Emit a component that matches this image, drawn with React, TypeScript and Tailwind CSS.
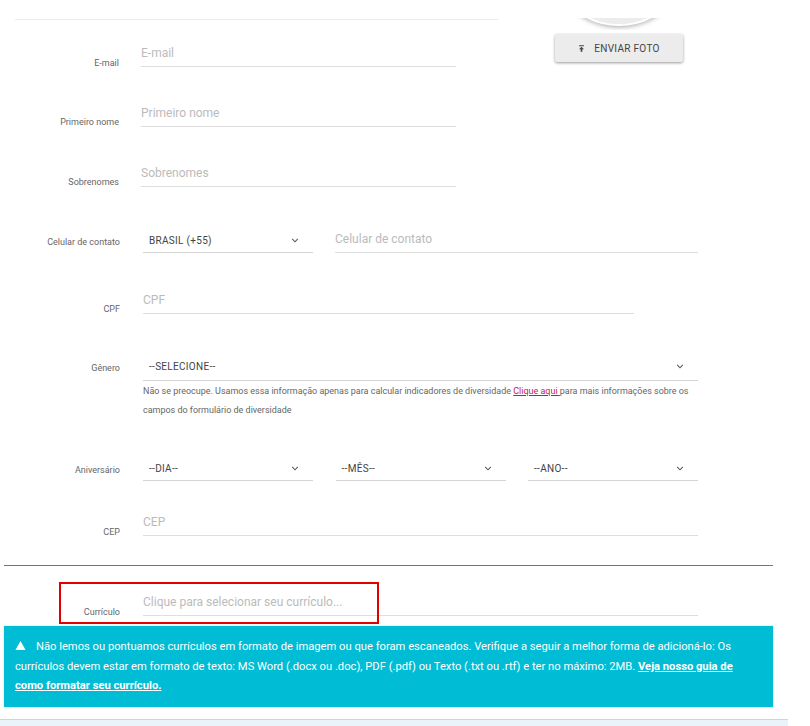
const font = "font-['Roboto',sans-serif]";

function Chevron({ className }: { className: string }) {
  return (
    <svg viewBox="0 0 10 6" className={className} fill="none" stroke="#555" strokeWidth="1.3">
      <path d="M1.5 1 L5 4.6 L8.5 1" />
    </svg>
  );
}

function Label({ text, top }: { text: string; top: string }) {
  return <div className={`w-[105px] shrink-0 text-right text-[9px] leading-[12px] text-[#666] ${top}`}>{text}</div>;
}

function TextField({ placeholder, className }: { placeholder: string; className: string }) {
  return (
    <div className={`h-[30px] border-b border-[#dedede] text-[12px] leading-[33px] text-[#bbbbbb] ${className}`}>
      {placeholder}
    </div>
  );
}

function SelectField({ value, className }: { value: string; className: string }) {
  return (
    <div className={`flex h-[30px] items-center justify-between border-b border-[#d5d5d5] pt-[5px] pr-[14px] pl-[6px] text-[10px] tracking-[0.3px] text-[#444] ${className}`}>
      <span>{value}</span>
      <Chevron className="h-[5px] w-[8px]" />
    </div>
  );
}

export default function App() {
  return (
    <div className={`relative h-[726px] w-[810px] overflow-hidden bg-white ${font}`}>
      <div className="flex pt-[18px]">
        <div className="mt-[1px] ml-[15px] w-[483px] border-t border-[#ececec]">
          <div className="mt-[17px] flex h-[60px] items-start">
            <Label text="E-mail" top="mt-[20px] -ml-[1px]" />
            <TextField placeholder="E-mail" className="ml-[22px] w-[315px]" />
          </div>
          <div className="flex h-[60px] items-start">
            <Label text="Primeiro nome" top="mt-[19px] -ml-[1px]" />
            <TextField placeholder="Primeiro nome" className="ml-[22px] w-[315px]" />
          </div>
          <div className="flex h-[60px] items-start">
            <Label text="Sobrenomes" top="mt-[19px] -ml-[1px]" />
            <TextField placeholder="Sobrenomes" className="ml-[22px] w-[315px]" />
          </div>
        </div>
        <div className="ml-[57px] flex w-[128px] flex-col items-center">
          <div className="relative h-[12px] w-full overflow-hidden">
            <div className="absolute bottom-[4px] left-[-6px] h-[140px] w-[140px] rounded-full border-2 border-white bg-[#ececec] shadow-[0_1px_5px_rgba(0,0,0,0.35)]" />
          </div>
          <div className="mt-[4px] flex h-[28px] w-full items-center justify-center gap-[9px] rounded-[2px] bg-[#ececec] text-[10px] tracking-[0.3px] text-[#444] shadow-[0_1px_3px_rgba(0,0,0,0.4)]">
            <svg viewBox="0 0 10 10" className="h-[7px] w-[7px]" fill="#444">
              <path d="M1.5 0.5 H8.5 V1.8 H1.5 Z M5 2.5 L8.5 6 H6.2 V9.5 H3.8 V6 H1.5 Z" />
            </svg>
            <span>ENVIAR FOTO</span>
          </div>
        </div>
      </div>

      <div className="flex h-[60px] items-start pt-[6px]">
        <Label text="Celular de contato" top="mt-[13px] ml-[15px]" />
        <SelectField value="BRASIL (+55)" className="ml-[23px] w-[170px]" />
        <TextField placeholder="Celular de contato" className="ml-[22px] w-[363px]" />
      </div>
      <div className="flex h-[74px] items-start pt-[7px]">
        <Label text="CPF" top="mt-[19px] ml-[15px]" />
        <TextField placeholder="CPF" className="ml-[23px] w-[491px]" />
      </div>
      <div className="flex items-start">
        <Label text="Gênero" top="mt-[11px] ml-[15px]" />
        <div className="ml-[23px] w-[555px]">
          <SelectField value="--SELECIONE--" className="w-full pb-[3px]" />
          <p className="mt-[1px] text-[8.97px] leading-[19px] text-[#666]">
            Não se preocupe. Usamos essa informação apenas para calcular indicadores de diversidade{" "}
            <a className="text-[#c2185b] underline">Clique aqui </a>
            para mais informações sobre os campos do formulário de diversidade
          </p>
        </div>
      </div>
      <div className="mt-[31px] flex h-[50px] items-start">
        <Label text="Aniversário" top="mt-[13px] ml-[15px]" />
        <div className="ml-[23px] flex w-[555px] gap-[22.5px]">
          <SelectField value="--DIA--" className="w-[170px]" />
          <SelectField value="--MÊS--" className="w-[170px]" />
          <SelectField value="--ANO--" className="w-[170px]" />
        </div>
      </div>
      <div className="mt-[5px] flex h-[38px] items-start">
        <Label text="CEP" top="mt-[20px] ml-[15px]" />
        <TextField placeholder="CEP" className="ml-[23px] w-[555px]" />
      </div>
      <div className="mt-[21px] ml-[4px] w-[769px] border-t border-[#d8437f]" />
      <div className="relative mt-[20px] flex h-[30px] items-start">
        <Label text="Currículo" top="mt-[20px] ml-[15px]" />
        <TextField placeholder="Clique para selecionar seu currículo..." className="ml-[23px] w-[555px]" />
        <div className="absolute top-[-4px] left-[59px] h-[42px] w-[320px] border-2 border-[#e00000]" />
      </div>
      <div className="mt-[10px] ml-[4px] h-[81px] w-[769px] bg-[#00bcd4] pt-[11px] pr-[28px] pl-[11px] text-[11.2px] leading-[19.5px] text-white shadow-[0_0_2px_rgba(0,0,0,0.2)]">
        <svg viewBox="0 0 24 24" className="mr-[10px] inline-block h-[11px] w-[11px] align-[-1px]" fill="white">
          <path d="M12 2 L23 22 H1 Z" />
        </svg>
        Não lemos ou pontuamos currículos em formato de imagem ou que foram escaneados. Verifique a seguir a melhor forma de adicioná-lo: Os currículos devem estar em formato de texto: MS Word (.docx ou .doc), PDF (.pdf) ou Texto (.txt ou .rtf) e ter no máximo: 2MB.{" "}
        <a className="font-bold underline">Veja nosso guia de como formatar seu currículo.</a>
      </div>
      <div className="mt-[12px] h-[8px] w-[788px] border-t border-[#cfd3d6] bg-[#eaf3f9]" />
    </div>
  );
}
